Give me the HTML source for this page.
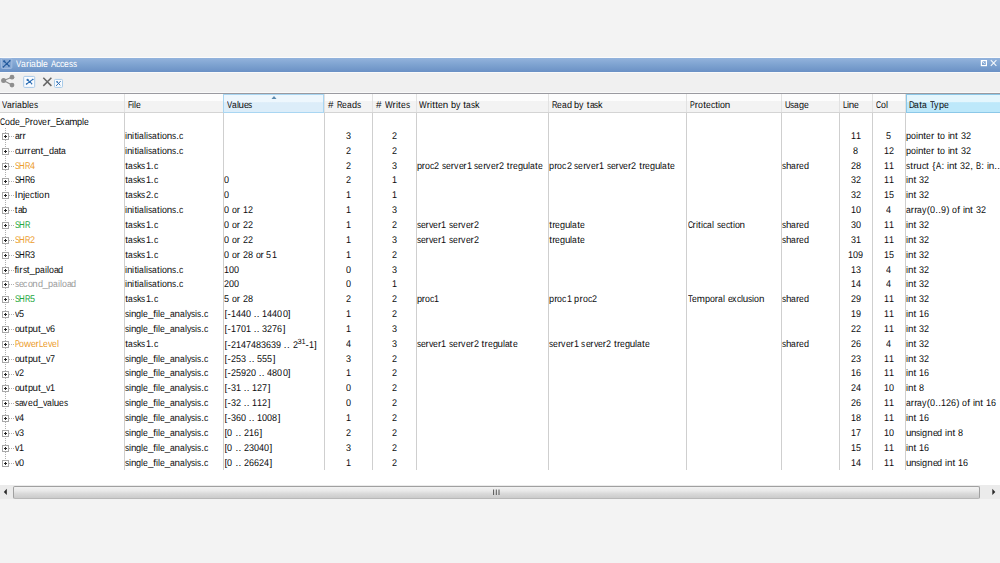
<!DOCTYPE html><html><head><meta charset="utf-8"><style>
*{margin:0;padding:0;box-sizing:border-box}
html,body{width:1000px;height:563px;overflow:hidden;background:#f3f3f3;font-family:"Liberation Sans",sans-serif;text-rendering:geometricPrecision}
.a{position:absolute}
.t{position:absolute;white-space:pre;font-size:9.8px;letter-spacing:0px;line-height:1;color:#0c0c0c}
.t b{font-weight:normal}
.k0{display:inline-block;width:5.20px;transform:scaleX(0.796);transform-origin:0 0}
.k1{display:inline-block;width:4.76px;transform:scaleX(0.873);transform-origin:0 0}
.k2{margin:0 0.03px}
.k3{display:inline-block;width:2.00px;transform:scaleX(0.916);transform-origin:0 0}
.k4{display:inline-block;width:5.06px;transform:scaleX(0.929);transform-origin:0 0}
.k5{display:inline-block;width:2.00px;transform:scaleX(0.916);transform-origin:0 0}
.k6{display:inline-block;width:4.78px;transform:scaleX(0.876);transform-origin:0 0}
.k7{display:inline-block;width:4.07px;transform:scaleX(0.831);transform-origin:0 0}
.k8{display:inline-block;width:4.46px;transform:scaleX(0.745);transform-origin:0 0}
.k9{margin:0 -0.17px}
.k10{margin:0 0.53px}
.k11{margin:0 0.01px}
.k12{display:inline-block;width:5.41px;transform:scaleX(0.764);transform-origin:0 0}
.k13{display:inline-block;width:5.06px;transform:scaleX(0.929);transform-origin:0 0}
.k14{display:inline-block;width:7.67px;transform:scaleX(0.829);transform-origin:0 0}
.k15{margin:0 0.17px}
.k16{margin:0 -0.17px}
.k17{display:inline-block;width:4.43px;transform:scaleX(0.903);transform-origin:0 0}
.k18{display:inline-block;width:4.51px;transform:scaleX(0.921);transform-origin:0 0}
.k19{display:inline-block;width:4.79px;transform:scaleX(0.733);transform-origin:0 0}
.k20{display:inline-block;width:4.91px;transform:scaleX(0.901);transform-origin:0 0}
.k21{display:inline-block;width:4.27px;transform:scaleX(0.872);transform-origin:0 0}
.k22{display:inline-block;width:5.59px;transform:scaleX(0.790);transform-origin:0 0}
.k23{display:inline-block;width:5.06px;transform:scaleX(0.929);transform-origin:0 0}
.k24{display:inline-block;width:4.27px;transform:scaleX(0.784);transform-origin:0 0}
.k25{display:inline-block;width:5.08px;transform:scaleX(0.718);transform-origin:0 0}
.k26{display:inline-block;width:5.75px;transform:scaleX(0.813);transform-origin:0 0}
.k27{display:inline-block;width:4.75px;transform:scaleX(0.793);transform-origin:0 0}
.k28{display:inline-block;width:5.06px;transform:scaleX(0.929);transform-origin:0 0}
.k29{margin:0 -0.17px}
.k30{display:inline-block;width:4.43px;transform:scaleX(0.903);transform-origin:0 0}
.k31{display:inline-block;width:4.77px;transform:scaleX(0.730);transform-origin:0 0}
.k32{display:inline-block;width:4.43px;transform:scaleX(0.903);transform-origin:0 0}
.k33{margin:0 -0.21px}
.k34{margin:0 0.19px}
.k35{display:inline-block;width:5.02px;transform:scaleX(0.920);transform-origin:0 0}
.k36{display:inline-block;width:5.02px;transform:scaleX(0.920);transform-origin:0 0}
.k37{display:inline-block;width:5.02px;transform:scaleX(0.920);transform-origin:0 0}
.k38{display:inline-block;width:5.02px;transform:scaleX(0.920);transform-origin:0 0}
.k39{display:inline-block;width:5.02px;transform:scaleX(0.920);transform-origin:0 0}
.k40{display:inline-block;width:4.82px;transform:scaleX(0.737);transform-origin:0 0}
.k41{display:inline-block;width:5.74px;transform:scaleX(0.811);transform-origin:0 0}
.k42{display:inline-block;width:5.02px;transform:scaleX(0.920);transform-origin:0 0}
.k43{margin:0 -0.17px}
.k44{margin:0 0.50px}
.k45{display:inline-block;width:5.24px;transform:scaleX(0.801);transform-origin:0 0}
.k46{margin:0 0.19px}
.k47{margin:0 0.19px}
.k48{display:inline-block;width:5.11px;transform:scaleX(0.782);transform-origin:0 0}
.k49{display:inline-block;width:5.02px;transform:scaleX(0.920);transform-origin:0 0}
.k50{display:inline-block;width:5.02px;transform:scaleX(0.920);transform-origin:0 0}
.k51{margin:0 0.30px}
.k52{margin:0 0.11px}
.k53{margin:0 0.07px}
.k54{display:inline-block;width:5.02px;transform:scaleX(0.920);transform-origin:0 0}
.k55{margin:0 0.07px}
.k56{margin:0 0.04px}
.k57{margin:0 0.34px}
.k58{margin:0 -0.04px}
.k59{margin:0 0.34px}
.k60{display:inline-block;width:5.02px;transform:scaleX(0.920);transform-origin:0 0}
.k61{margin:0 -0.24px}
.k62{display:inline-block;width:5.20px;transform:scaleX(0.813);transform-origin:0 0}
.k63{display:inline-block;width:4.76px;transform:scaleX(0.891);transform-origin:0 0}
.k64{margin:0 0.07px}
.k65{margin:0 -0.07px}
.k66{margin:0 -0.14px}
.k67{margin:0 -0.07px}
.k68{display:inline-block;width:4.78px;transform:scaleX(0.895);transform-origin:0 0}
.k69{margin:0 0.04px}
.k70{display:inline-block;width:5.24px;transform:scaleX(0.818);transform-origin:0 0}
.k71{display:inline-block;width:4.27px;transform:scaleX(0.890);transform-origin:0 0}
.k72{display:inline-block;width:4.07px;transform:scaleX(0.848);transform-origin:0 0}
</style></head><body>

<div class="a" style="left:0;top:57px;width:1000px;height:1px;background:#fbfbfb"></div>
<div class="a" style="left:0;top:58px;width:1000px;height:14px;background:linear-gradient(#93b3dc,#7da2d0 50%,#6b91c5)"></div>
<div class="a" style="left:0;top:72px;width:1000px;height:20px;background:#f0f0f0;border-top:1px solid #fafafa"></div>
<div class="a" style="left:0;top:92px;width:1000px;height:1px;background:#f9f9f9"></div>
<div class="a" style="left:0;top:93px;width:1000px;height:1px;background:#9a9aa0"></div>
<div class="a" style="left:0;top:94px;width:1000px;height:391px;background:#fff"></div>
<div class="a" style="left:0;top:94px;width:1000px;height:19px;background:linear-gradient(#fdfdfd 0,#fdfdfd 36%,#f3f3f3 41%,#f3f3f3 100%);border-bottom:1px solid #d4d4d4"></div>
<div class="a" style="left:124.0px;top:94px;width:1px;height:18px;background:#e2e2e2"></div>
<div class="a" style="left:223.0px;top:94px;width:1px;height:18px;background:#e2e2e2"></div>
<div class="a" style="left:324.0px;top:94px;width:1px;height:18px;background:#e2e2e2"></div>
<div class="a" style="left:372.0px;top:94px;width:1px;height:18px;background:#e2e2e2"></div>
<div class="a" style="left:415.5px;top:94px;width:1px;height:18px;background:#e2e2e2"></div>
<div class="a" style="left:548.0px;top:94px;width:1px;height:18px;background:#e2e2e2"></div>
<div class="a" style="left:686.4px;top:94px;width:1px;height:18px;background:#e2e2e2"></div>
<div class="a" style="left:781.0px;top:94px;width:1px;height:18px;background:#e2e2e2"></div>
<div class="a" style="left:839.0px;top:94px;width:1px;height:18px;background:#e2e2e2"></div>
<div class="a" style="left:872.0px;top:94px;width:1px;height:18px;background:#e2e2e2"></div>
<div class="a" style="left:905.0px;top:94px;width:1px;height:18px;background:#e2e2e2"></div>
<div class="a" style="left:223.4px;top:94px;width:101px;height:19px;background:linear-gradient(#eef7fd 0,#eef7fd 40%,#dcedf9 45%);border:1px solid #a9d6f2"></div>
<div class="a" style="left:905.5px;top:94px;width:95px;height:19px;background:linear-gradient(#e4f6fd 0,#e4f6fd 40%,#bde8fa 45%);border:1px solid #8cc8e8;border-right:0"></div>
<svg class="a" style="left:270px;top:95px" width="8" height="5"><path d="M1.5 4 L4 1 L6.5 4 Z" fill="#5a8ab0"/></svg>
<div class="t" style="left:1.8px;top:101.20px"><b class="k0">V</b><b class="k1">a</b><b class="k2">r</b><b class="k3">i</b><b class="k1">a</b><b class="k4">b</b><b class="k5">l</b><b class="k6">e</b><b class="k7">s</b></div>
<div class="t" style="left:127.6px;top:101.20px"><b class="k8">F</b><b class="k3">i</b><b class="k5">l</b><b class="k6">e</b></div>
<div class="t" style="left:226.6px;top:101.20px"><b class="k0">V</b><b class="k1">a</b><b class="k5">l</b><b class="k9">u</b><b class="k6">e</b><b class="k7">s</b></div>
<div class="t" style="left:327.6px;top:101.20px"><b class="k10">#</b><b class="k11">&#32;</b><b class="k12">R</b><b class="k6">e</b><b class="k1">a</b><b class="k13">d</b><b class="k7">s</b></div>
<div class="t" style="left:375.6px;top:101.20px"><b class="k10">#</b><b class="k11">&#32;</b><b class="k14">W</b><b class="k2">r</b><b class="k3">i</b><b class="k15">t</b><b class="k6">e</b><b class="k7">s</b></div>
<div class="t" style="left:419.2px;top:101.20px"><b class="k14">W</b><b class="k2">r</b><b class="k3">i</b><b class="k15">t</b><b class="k15">t</b><b class="k6">e</b><b class="k16">n</b><b class="k11">&#32;</b><b class="k4">b</b><b class="k17">y</b><b class="k11">&#32;</b><b class="k15">t</b><b class="k1">a</b><b class="k7">s</b><b class="k18">k</b></div>
<div class="t" style="left:551.6px;top:101.20px"><b class="k12">R</b><b class="k6">e</b><b class="k1">a</b><b class="k13">d</b><b class="k11">&#32;</b><b class="k4">b</b><b class="k17">y</b><b class="k11">&#32;</b><b class="k15">t</b><b class="k1">a</b><b class="k7">s</b><b class="k18">k</b></div>
<div class="t" style="left:690.0px;top:101.20px"><b class="k19">P</b><b class="k2">r</b><b class="k20">o</b><b class="k15">t</b><b class="k6">e</b><b class="k21">c</b><b class="k15">t</b><b class="k3">i</b><b class="k20">o</b><b class="k16">n</b></div>
<div class="t" style="left:784.6px;top:101.20px"><b class="k22">U</b><b class="k7">s</b><b class="k1">a</b><b class="k23">g</b><b class="k6">e</b></div>
<div class="t" style="left:842.6px;top:101.20px"><b class="k24">L</b><b class="k3">i</b><b class="k16">n</b><b class="k6">e</b></div>
<div class="t" style="left:875.6px;top:101.20px"><b class="k25">C</b><b class="k20">o</b><b class="k5">l</b></div>
<div class="t" style="left:908.6px;top:101.20px"><b class="k26">D</b><b class="k1">a</b><b class="k15">t</b><b class="k1">a</b><b class="k11">&#32;</b><b class="k27">T</b><b class="k17">y</b><b class="k28">p</b><b class="k6">e</b></div>
<div class="a" style="left:124.0px;top:113px;width:1px;height:357px;background:#cfcfcf"></div>
<div class="a" style="left:223.0px;top:113px;width:1px;height:357px;background:#cfcfcf"></div>
<div class="a" style="left:324.0px;top:113px;width:1px;height:357px;background:#cfcfcf"></div>
<div class="a" style="left:372.0px;top:113px;width:1px;height:357px;background:#cfcfcf"></div>
<div class="a" style="left:415.5px;top:113px;width:1px;height:357px;background:#cfcfcf"></div>
<div class="a" style="left:548.0px;top:113px;width:1px;height:357px;background:#cfcfcf"></div>
<div class="a" style="left:686.4px;top:113px;width:1px;height:357px;background:#cfcfcf"></div>
<div class="a" style="left:781.0px;top:113px;width:1px;height:357px;background:#cfcfcf"></div>
<div class="a" style="left:839.0px;top:113px;width:1px;height:357px;background:#cfcfcf"></div>
<div class="a" style="left:872.0px;top:113px;width:1px;height:357px;background:#cfcfcf"></div>
<div class="a" style="left:905.0px;top:113px;width:1px;height:357px;background:#cfcfcf"></div>
<div class="t" style="left:0px;top:117.90px"><b class="k25">C</b><b class="k20">o</b><b class="k13">d</b><b class="k6">e</b><b class="k29">_</b><b class="k19">P</b><b class="k2">r</b><b class="k20">o</b><b class="k30">v</b><b class="k6">e</b><b class="k2">r</b><b class="k29">_</b><b class="k31">E</b><b class="k32">x</b><b class="k1">a</b><b class="k33">m</b><b class="k28">p</b><b class="k5">l</b><b class="k6">e</b></div>
<div class="a" style="left:5px;top:128px;width:1px;height:335px;border-left:1px dotted #b0b0b0"></div>
<div class="a" style="left:2px;top:133px;width:7px;height:7px;border:1px solid #a8a8a8;background:#fff"></div>
<div class="a" style="left:4px;top:136px;width:3px;height:1px;background:#262626"></div>
<div class="a" style="left:5px;top:135px;width:1px;height:3px;background:#262626"></div>
<div class="a" style="left:9px;top:136px;width:5px;height:0;border-top:1px dotted #b0b0b0"></div>
<div class="t" style="left:14.5px;top:131.85px;color:#0c0c0c"><b class="k1">a</b><b class="k2">r</b><b class="k2">r</b></div>
<div class="t" style="left:125.1px;top:131.85px"><b class="k3">i</b><b class="k16">n</b><b class="k3">i</b><b class="k15">t</b><b class="k3">i</b><b class="k1">a</b><b class="k5">l</b><b class="k3">i</b><b class="k7">s</b><b class="k1">a</b><b class="k15">t</b><b class="k3">i</b><b class="k20">o</b><b class="k16">n</b><b class="k7">s</b><b class="k34">.</b><b class="k21">c</b></div>
<div class="t" style="left:324.6px;width:47.4px;text-align:center;top:131.85px"><b class="k35">3</b></div>
<div class="t" style="left:372.6px;width:42.9px;text-align:center;top:131.85px"><b class="k36">2</b></div>
<div class="t" style="left:839.6px;width:32.4px;text-align:center;top:131.85px"><b class="k37">1</b><b class="k37">1</b></div>
<div class="t" style="left:872.6px;width:32.4px;text-align:center;top:131.85px"><b class="k38">5</b></div>
<div class="t" style="left:906.1px;top:131.85px"><b class="k28">p</b><b class="k20">o</b><b class="k3">i</b><b class="k16">n</b><b class="k15">t</b><b class="k6">e</b><b class="k2">r</b><b class="k11">&#32;</b><b class="k15">t</b><b class="k20">o</b><b class="k11">&#32;</b><b class="k3">i</b><b class="k16">n</b><b class="k15">t</b><b class="k11">&#32;</b><b class="k35">3</b><b class="k36">2</b></div>
<div class="a" style="left:2px;top:148px;width:7px;height:7px;border:1px solid #a8a8a8;background:#fff"></div>
<div class="a" style="left:4px;top:151px;width:3px;height:1px;background:#262626"></div>
<div class="a" style="left:5px;top:150px;width:1px;height:3px;background:#262626"></div>
<div class="a" style="left:9px;top:151px;width:5px;height:0;border-top:1px dotted #b0b0b0"></div>
<div class="t" style="left:14.5px;top:146.70px;color:#0c0c0c"><b class="k21">c</b><b class="k9">u</b><b class="k2">r</b><b class="k2">r</b><b class="k6">e</b><b class="k16">n</b><b class="k15">t</b><b class="k29">_</b><b class="k13">d</b><b class="k1">a</b><b class="k15">t</b><b class="k1">a</b></div>
<div class="t" style="left:125.1px;top:146.70px"><b class="k3">i</b><b class="k16">n</b><b class="k3">i</b><b class="k15">t</b><b class="k3">i</b><b class="k1">a</b><b class="k5">l</b><b class="k3">i</b><b class="k7">s</b><b class="k1">a</b><b class="k15">t</b><b class="k3">i</b><b class="k20">o</b><b class="k16">n</b><b class="k7">s</b><b class="k34">.</b><b class="k21">c</b></div>
<div class="t" style="left:324.6px;width:47.4px;text-align:center;top:146.70px"><b class="k36">2</b></div>
<div class="t" style="left:372.6px;width:42.9px;text-align:center;top:146.70px"><b class="k36">2</b></div>
<div class="t" style="left:839.6px;width:32.4px;text-align:center;top:146.70px"><b class="k39">8</b></div>
<div class="t" style="left:872.6px;width:32.4px;text-align:center;top:146.70px"><b class="k37">1</b><b class="k36">2</b></div>
<div class="t" style="left:906.1px;top:146.70px"><b class="k28">p</b><b class="k20">o</b><b class="k3">i</b><b class="k16">n</b><b class="k15">t</b><b class="k6">e</b><b class="k2">r</b><b class="k11">&#32;</b><b class="k15">t</b><b class="k20">o</b><b class="k11">&#32;</b><b class="k3">i</b><b class="k16">n</b><b class="k15">t</b><b class="k11">&#32;</b><b class="k35">3</b><b class="k36">2</b></div>
<div class="a" style="left:2px;top:163px;width:7px;height:7px;border:1px solid #a8a8a8;background:#fff"></div>
<div class="a" style="left:4px;top:166px;width:3px;height:1px;background:#262626"></div>
<div class="a" style="left:5px;top:165px;width:1px;height:3px;background:#262626"></div>
<div class="a" style="left:9px;top:166px;width:5px;height:0;border-top:1px dotted #b0b0b0"></div>
<div class="t" style="left:14.5px;top:161.55px;color:#ec9c2c"><b class="k40">S</b><b class="k41">H</b><b class="k12">R</b><b class="k42">4</b></div>
<div class="t" style="left:125.1px;top:161.55px"><b class="k15">t</b><b class="k1">a</b><b class="k7">s</b><b class="k18">k</b><b class="k7">s</b><b class="k37">1</b><b class="k34">.</b><b class="k21">c</b></div>
<div class="t" style="left:324.6px;width:47.4px;text-align:center;top:161.55px"><b class="k36">2</b></div>
<div class="t" style="left:372.6px;width:42.9px;text-align:center;top:161.55px"><b class="k35">3</b></div>
<div class="t" style="left:416.7px;top:161.55px"><b class="k28">p</b><b class="k2">r</b><b class="k20">o</b><b class="k21">c</b><b class="k36">2</b><b class="k11">&#32;</b><b class="k7">s</b><b class="k6">e</b><b class="k2">r</b><b class="k30">v</b><b class="k6">e</b><b class="k2">r</b><b class="k37">1</b><b class="k11">&#32;</b><b class="k7">s</b><b class="k6">e</b><b class="k2">r</b><b class="k30">v</b><b class="k6">e</b><b class="k2">r</b><b class="k36">2</b><b class="k11">&#32;</b><b class="k15">t</b><b class="k2">r</b><b class="k6">e</b><b class="k23">g</b><b class="k9">u</b><b class="k5">l</b><b class="k1">a</b><b class="k15">t</b><b class="k6">e</b></div>
<div class="t" style="left:549.1px;top:161.55px"><b class="k28">p</b><b class="k2">r</b><b class="k20">o</b><b class="k21">c</b><b class="k36">2</b><b class="k11">&#32;</b><b class="k7">s</b><b class="k6">e</b><b class="k2">r</b><b class="k30">v</b><b class="k6">e</b><b class="k2">r</b><b class="k37">1</b><b class="k11">&#32;</b><b class="k7">s</b><b class="k6">e</b><b class="k2">r</b><b class="k30">v</b><b class="k6">e</b><b class="k2">r</b><b class="k36">2</b><b class="k11">&#32;</b><b class="k15">t</b><b class="k2">r</b><b class="k6">e</b><b class="k23">g</b><b class="k9">u</b><b class="k5">l</b><b class="k1">a</b><b class="k15">t</b><b class="k6">e</b></div>
<div class="t" style="left:782.1px;top:161.55px"><b class="k7">s</b><b class="k43">h</b><b class="k1">a</b><b class="k2">r</b><b class="k6">e</b><b class="k13">d</b></div>
<div class="t" style="left:839.6px;width:32.4px;text-align:center;top:161.55px"><b class="k36">2</b><b class="k39">8</b></div>
<div class="t" style="left:872.6px;width:32.4px;text-align:center;top:161.55px"><b class="k37">1</b><b class="k37">1</b></div>
<div class="t" style="left:906.1px;top:161.55px"><b class="k7">s</b><b class="k15">t</b><b class="k2">r</b><b class="k9">u</b><b class="k21">c</b><b class="k15">t</b><b class="k11">&#32;</b><b class="k44">{</b><b class="k45">A</b><b class="k46">:</b><b class="k11">&#32;</b><b class="k3">i</b><b class="k16">n</b><b class="k15">t</b><b class="k11">&#32;</b><b class="k35">3</b><b class="k36">2</b><b class="k47">,</b><b class="k11">&#32;</b><b class="k48">B</b><b class="k46">:</b><b class="k11">&#32;</b><b class="k3">i</b><b class="k16">n</b><b class="k34">.</b><b class="k34">.</b></div>
<div class="a" style="left:2px;top:178px;width:7px;height:7px;border:1px solid #a8a8a8;background:#fff"></div>
<div class="a" style="left:4px;top:181px;width:3px;height:1px;background:#262626"></div>
<div class="a" style="left:5px;top:180px;width:1px;height:3px;background:#262626"></div>
<div class="a" style="left:9px;top:181px;width:5px;height:0;border-top:1px dotted #b0b0b0"></div>
<div class="t" style="left:14.5px;top:176.40px;color:#0c0c0c"><b class="k40">S</b><b class="k41">H</b><b class="k12">R</b><b class="k49">6</b></div>
<div class="t" style="left:125.1px;top:176.40px"><b class="k15">t</b><b class="k1">a</b><b class="k7">s</b><b class="k18">k</b><b class="k7">s</b><b class="k37">1</b><b class="k34">.</b><b class="k21">c</b></div>
<div class="t" style="left:224.1px;top:176.40px"><b class="k50">0</b></div>
<div class="t" style="left:324.6px;width:47.4px;text-align:center;top:176.40px"><b class="k36">2</b></div>
<div class="t" style="left:372.6px;width:42.9px;text-align:center;top:176.40px"><b class="k37">1</b></div>
<div class="t" style="left:839.6px;width:32.4px;text-align:center;top:176.40px"><b class="k35">3</b><b class="k36">2</b></div>
<div class="t" style="left:872.6px;width:32.4px;text-align:center;top:176.40px"><b class="k37">1</b><b class="k37">1</b></div>
<div class="t" style="left:906.1px;top:176.40px"><b class="k3">i</b><b class="k16">n</b><b class="k15">t</b><b class="k11">&#32;</b><b class="k35">3</b><b class="k36">2</b></div>
<div class="a" style="left:2px;top:192px;width:7px;height:7px;border:1px solid #a8a8a8;background:#fff"></div>
<div class="a" style="left:4px;top:195px;width:3px;height:1px;background:#262626"></div>
<div class="a" style="left:5px;top:194px;width:1px;height:3px;background:#262626"></div>
<div class="a" style="left:9px;top:195px;width:5px;height:0;border-top:1px dotted #b0b0b0"></div>
<div class="t" style="left:14.5px;top:191.25px;color:#0c0c0c"><b class="k51">I</b><b class="k16">n</b><b class="k52">j</b><b class="k6">e</b><b class="k21">c</b><b class="k15">t</b><b class="k3">i</b><b class="k20">o</b><b class="k16">n</b></div>
<div class="t" style="left:125.1px;top:191.25px"><b class="k15">t</b><b class="k1">a</b><b class="k7">s</b><b class="k18">k</b><b class="k7">s</b><b class="k36">2</b><b class="k34">.</b><b class="k21">c</b></div>
<div class="t" style="left:224.1px;top:191.25px"><b class="k50">0</b></div>
<div class="t" style="left:324.6px;width:47.4px;text-align:center;top:191.25px"><b class="k37">1</b></div>
<div class="t" style="left:372.6px;width:42.9px;text-align:center;top:191.25px"><b class="k37">1</b></div>
<div class="t" style="left:839.6px;width:32.4px;text-align:center;top:191.25px"><b class="k35">3</b><b class="k36">2</b></div>
<div class="t" style="left:872.6px;width:32.4px;text-align:center;top:191.25px"><b class="k37">1</b><b class="k38">5</b></div>
<div class="t" style="left:906.1px;top:191.25px"><b class="k3">i</b><b class="k16">n</b><b class="k15">t</b><b class="k11">&#32;</b><b class="k35">3</b><b class="k36">2</b></div>
<div class="a" style="left:2px;top:207px;width:7px;height:7px;border:1px solid #a8a8a8;background:#fff"></div>
<div class="a" style="left:4px;top:210px;width:3px;height:1px;background:#262626"></div>
<div class="a" style="left:5px;top:209px;width:1px;height:3px;background:#262626"></div>
<div class="a" style="left:9px;top:210px;width:5px;height:0;border-top:1px dotted #b0b0b0"></div>
<div class="t" style="left:14.5px;top:206.10px;color:#0c0c0c"><b class="k15">t</b><b class="k1">a</b><b class="k4">b</b></div>
<div class="t" style="left:125.1px;top:206.10px"><b class="k3">i</b><b class="k16">n</b><b class="k3">i</b><b class="k15">t</b><b class="k3">i</b><b class="k1">a</b><b class="k5">l</b><b class="k3">i</b><b class="k7">s</b><b class="k1">a</b><b class="k15">t</b><b class="k3">i</b><b class="k20">o</b><b class="k16">n</b><b class="k7">s</b><b class="k34">.</b><b class="k21">c</b></div>
<div class="t" style="left:224.1px;top:206.10px"><b class="k50">0</b><b class="k11">&#32;</b><b class="k20">o</b><b class="k2">r</b><b class="k11">&#32;</b><b class="k37">1</b><b class="k36">2</b></div>
<div class="t" style="left:324.6px;width:47.4px;text-align:center;top:206.10px"><b class="k37">1</b></div>
<div class="t" style="left:372.6px;width:42.9px;text-align:center;top:206.10px"><b class="k35">3</b></div>
<div class="t" style="left:839.6px;width:32.4px;text-align:center;top:206.10px"><b class="k37">1</b><b class="k50">0</b></div>
<div class="t" style="left:872.6px;width:32.4px;text-align:center;top:206.10px"><b class="k42">4</b></div>
<div class="t" style="left:906.1px;top:206.10px"><b class="k1">a</b><b class="k2">r</b><b class="k2">r</b><b class="k1">a</b><b class="k17">y</b><b class="k53">(</b><b class="k50">0</b><b class="k34">.</b><b class="k34">.</b><b class="k54">9</b><b class="k55">)</b><b class="k11">&#32;</b><b class="k20">o</b><b class="k56">f</b><b class="k11">&#32;</b><b class="k3">i</b><b class="k16">n</b><b class="k15">t</b><b class="k11">&#32;</b><b class="k35">3</b><b class="k36">2</b></div>
<div class="a" style="left:2px;top:222px;width:7px;height:7px;border:1px solid #a8a8a8;background:#fff"></div>
<div class="a" style="left:4px;top:225px;width:3px;height:1px;background:#262626"></div>
<div class="a" style="left:5px;top:224px;width:1px;height:3px;background:#262626"></div>
<div class="a" style="left:9px;top:225px;width:5px;height:0;border-top:1px dotted #b0b0b0"></div>
<div class="t" style="left:14.5px;top:220.95px;color:#22a63c"><b class="k40">S</b><b class="k41">H</b><b class="k12">R</b></div>
<div class="t" style="left:125.1px;top:220.95px"><b class="k15">t</b><b class="k1">a</b><b class="k7">s</b><b class="k18">k</b><b class="k7">s</b><b class="k37">1</b><b class="k34">.</b><b class="k21">c</b></div>
<div class="t" style="left:224.1px;top:220.95px"><b class="k50">0</b><b class="k11">&#32;</b><b class="k20">o</b><b class="k2">r</b><b class="k11">&#32;</b><b class="k36">2</b><b class="k36">2</b></div>
<div class="t" style="left:324.6px;width:47.4px;text-align:center;top:220.95px"><b class="k37">1</b></div>
<div class="t" style="left:372.6px;width:42.9px;text-align:center;top:220.95px"><b class="k36">2</b></div>
<div class="t" style="left:416.7px;top:220.95px"><b class="k7">s</b><b class="k6">e</b><b class="k2">r</b><b class="k30">v</b><b class="k6">e</b><b class="k2">r</b><b class="k37">1</b><b class="k11">&#32;</b><b class="k7">s</b><b class="k6">e</b><b class="k2">r</b><b class="k30">v</b><b class="k6">e</b><b class="k2">r</b><b class="k36">2</b></div>
<div class="t" style="left:549.1px;top:220.95px"><b class="k15">t</b><b class="k2">r</b><b class="k6">e</b><b class="k23">g</b><b class="k9">u</b><b class="k5">l</b><b class="k1">a</b><b class="k15">t</b><b class="k6">e</b></div>
<div class="t" style="left:687.5px;top:220.95px"><b class="k25">C</b><b class="k2">r</b><b class="k3">i</b><b class="k15">t</b><b class="k3">i</b><b class="k21">c</b><b class="k1">a</b><b class="k5">l</b><b class="k11">&#32;</b><b class="k7">s</b><b class="k6">e</b><b class="k21">c</b><b class="k15">t</b><b class="k3">i</b><b class="k20">o</b><b class="k16">n</b></div>
<div class="t" style="left:782.1px;top:220.95px"><b class="k7">s</b><b class="k43">h</b><b class="k1">a</b><b class="k2">r</b><b class="k6">e</b><b class="k13">d</b></div>
<div class="t" style="left:839.6px;width:32.4px;text-align:center;top:220.95px"><b class="k35">3</b><b class="k50">0</b></div>
<div class="t" style="left:872.6px;width:32.4px;text-align:center;top:220.95px"><b class="k37">1</b><b class="k37">1</b></div>
<div class="t" style="left:906.1px;top:220.95px"><b class="k3">i</b><b class="k16">n</b><b class="k15">t</b><b class="k11">&#32;</b><b class="k35">3</b><b class="k36">2</b></div>
<div class="a" style="left:2px;top:237px;width:7px;height:7px;border:1px solid #a8a8a8;background:#fff"></div>
<div class="a" style="left:4px;top:240px;width:3px;height:1px;background:#262626"></div>
<div class="a" style="left:5px;top:239px;width:1px;height:3px;background:#262626"></div>
<div class="a" style="left:9px;top:240px;width:5px;height:0;border-top:1px dotted #b0b0b0"></div>
<div class="t" style="left:14.5px;top:235.80px;color:#ec9c2c"><b class="k40">S</b><b class="k41">H</b><b class="k12">R</b><b class="k36">2</b></div>
<div class="t" style="left:125.1px;top:235.80px"><b class="k15">t</b><b class="k1">a</b><b class="k7">s</b><b class="k18">k</b><b class="k7">s</b><b class="k37">1</b><b class="k34">.</b><b class="k21">c</b></div>
<div class="t" style="left:224.1px;top:235.80px"><b class="k50">0</b><b class="k11">&#32;</b><b class="k20">o</b><b class="k2">r</b><b class="k11">&#32;</b><b class="k36">2</b><b class="k36">2</b></div>
<div class="t" style="left:324.6px;width:47.4px;text-align:center;top:235.80px"><b class="k37">1</b></div>
<div class="t" style="left:372.6px;width:42.9px;text-align:center;top:235.80px"><b class="k35">3</b></div>
<div class="t" style="left:416.7px;top:235.80px"><b class="k7">s</b><b class="k6">e</b><b class="k2">r</b><b class="k30">v</b><b class="k6">e</b><b class="k2">r</b><b class="k37">1</b><b class="k11">&#32;</b><b class="k7">s</b><b class="k6">e</b><b class="k2">r</b><b class="k30">v</b><b class="k6">e</b><b class="k2">r</b><b class="k36">2</b></div>
<div class="t" style="left:549.1px;top:235.80px"><b class="k15">t</b><b class="k2">r</b><b class="k6">e</b><b class="k23">g</b><b class="k9">u</b><b class="k5">l</b><b class="k1">a</b><b class="k15">t</b><b class="k6">e</b></div>
<div class="t" style="left:782.1px;top:235.80px"><b class="k7">s</b><b class="k43">h</b><b class="k1">a</b><b class="k2">r</b><b class="k6">e</b><b class="k13">d</b></div>
<div class="t" style="left:839.6px;width:32.4px;text-align:center;top:235.80px"><b class="k35">3</b><b class="k37">1</b></div>
<div class="t" style="left:872.6px;width:32.4px;text-align:center;top:235.80px"><b class="k37">1</b><b class="k37">1</b></div>
<div class="t" style="left:906.1px;top:235.80px"><b class="k3">i</b><b class="k16">n</b><b class="k15">t</b><b class="k11">&#32;</b><b class="k35">3</b><b class="k36">2</b></div>
<div class="a" style="left:2px;top:252px;width:7px;height:7px;border:1px solid #a8a8a8;background:#fff"></div>
<div class="a" style="left:4px;top:255px;width:3px;height:1px;background:#262626"></div>
<div class="a" style="left:5px;top:254px;width:1px;height:3px;background:#262626"></div>
<div class="a" style="left:9px;top:255px;width:5px;height:0;border-top:1px dotted #b0b0b0"></div>
<div class="t" style="left:14.5px;top:250.65px;color:#0c0c0c"><b class="k40">S</b><b class="k41">H</b><b class="k12">R</b><b class="k35">3</b></div>
<div class="t" style="left:125.1px;top:250.65px"><b class="k15">t</b><b class="k1">a</b><b class="k7">s</b><b class="k18">k</b><b class="k7">s</b><b class="k37">1</b><b class="k34">.</b><b class="k21">c</b></div>
<div class="t" style="left:224.1px;top:250.65px"><b class="k50">0</b><b class="k11">&#32;</b><b class="k20">o</b><b class="k2">r</b><b class="k11">&#32;</b><b class="k36">2</b><b class="k39">8</b><b class="k11">&#32;</b><b class="k20">o</b><b class="k2">r</b><b class="k11">&#32;</b><b class="k38">5</b><b class="k37">1</b></div>
<div class="t" style="left:324.6px;width:47.4px;text-align:center;top:250.65px"><b class="k37">1</b></div>
<div class="t" style="left:372.6px;width:42.9px;text-align:center;top:250.65px"><b class="k36">2</b></div>
<div class="t" style="left:839.6px;width:32.4px;text-align:center;top:250.65px"><b class="k37">1</b><b class="k50">0</b><b class="k54">9</b></div>
<div class="t" style="left:872.6px;width:32.4px;text-align:center;top:250.65px"><b class="k37">1</b><b class="k38">5</b></div>
<div class="t" style="left:906.1px;top:250.65px"><b class="k3">i</b><b class="k16">n</b><b class="k15">t</b><b class="k11">&#32;</b><b class="k35">3</b><b class="k36">2</b></div>
<div class="a" style="left:2px;top:267px;width:7px;height:7px;border:1px solid #a8a8a8;background:#fff"></div>
<div class="a" style="left:4px;top:270px;width:3px;height:1px;background:#262626"></div>
<div class="a" style="left:5px;top:269px;width:1px;height:3px;background:#262626"></div>
<div class="a" style="left:9px;top:270px;width:5px;height:0;border-top:1px dotted #b0b0b0"></div>
<div class="t" style="left:14.5px;top:265.50px;color:#0c0c0c"><b class="k56">f</b><b class="k3">i</b><b class="k2">r</b><b class="k7">s</b><b class="k15">t</b><b class="k29">_</b><b class="k28">p</b><b class="k1">a</b><b class="k3">i</b><b class="k5">l</b><b class="k20">o</b><b class="k1">a</b><b class="k13">d</b></div>
<div class="t" style="left:125.1px;top:265.50px"><b class="k3">i</b><b class="k16">n</b><b class="k3">i</b><b class="k15">t</b><b class="k3">i</b><b class="k1">a</b><b class="k5">l</b><b class="k3">i</b><b class="k7">s</b><b class="k1">a</b><b class="k15">t</b><b class="k3">i</b><b class="k20">o</b><b class="k16">n</b><b class="k7">s</b><b class="k34">.</b><b class="k21">c</b></div>
<div class="t" style="left:224.1px;top:265.50px"><b class="k37">1</b><b class="k50">0</b><b class="k50">0</b></div>
<div class="t" style="left:324.6px;width:47.4px;text-align:center;top:265.50px"><b class="k50">0</b></div>
<div class="t" style="left:372.6px;width:42.9px;text-align:center;top:265.50px"><b class="k35">3</b></div>
<div class="t" style="left:839.6px;width:32.4px;text-align:center;top:265.50px"><b class="k37">1</b><b class="k35">3</b></div>
<div class="t" style="left:872.6px;width:32.4px;text-align:center;top:265.50px"><b class="k42">4</b></div>
<div class="t" style="left:906.1px;top:265.50px"><b class="k3">i</b><b class="k16">n</b><b class="k15">t</b><b class="k11">&#32;</b><b class="k35">3</b><b class="k36">2</b></div>
<div class="a" style="left:2px;top:281px;width:7px;height:7px;border:1px solid #a8a8a8;background:#fff"></div>
<div class="a" style="left:4px;top:284px;width:3px;height:1px;background:#262626"></div>
<div class="a" style="left:5px;top:283px;width:1px;height:3px;background:#262626"></div>
<div class="a" style="left:9px;top:284px;width:5px;height:0;border-top:1px dotted #b0b0b0"></div>
<div class="t" style="left:14.5px;top:280.35px;color:#9a9a9a"><b class="k7">s</b><b class="k6">e</b><b class="k21">c</b><b class="k20">o</b><b class="k16">n</b><b class="k13">d</b><b class="k29">_</b><b class="k28">p</b><b class="k1">a</b><b class="k3">i</b><b class="k5">l</b><b class="k20">o</b><b class="k1">a</b><b class="k13">d</b></div>
<div class="t" style="left:125.1px;top:280.35px"><b class="k3">i</b><b class="k16">n</b><b class="k3">i</b><b class="k15">t</b><b class="k3">i</b><b class="k1">a</b><b class="k5">l</b><b class="k3">i</b><b class="k7">s</b><b class="k1">a</b><b class="k15">t</b><b class="k3">i</b><b class="k20">o</b><b class="k16">n</b><b class="k7">s</b><b class="k34">.</b><b class="k21">c</b></div>
<div class="t" style="left:224.1px;top:280.35px"><b class="k36">2</b><b class="k50">0</b><b class="k50">0</b></div>
<div class="t" style="left:324.6px;width:47.4px;text-align:center;top:280.35px"><b class="k50">0</b></div>
<div class="t" style="left:372.6px;width:42.9px;text-align:center;top:280.35px"><b class="k37">1</b></div>
<div class="t" style="left:839.6px;width:32.4px;text-align:center;top:280.35px"><b class="k37">1</b><b class="k42">4</b></div>
<div class="t" style="left:872.6px;width:32.4px;text-align:center;top:280.35px"><b class="k42">4</b></div>
<div class="t" style="left:906.1px;top:280.35px"><b class="k3">i</b><b class="k16">n</b><b class="k15">t</b><b class="k11">&#32;</b><b class="k35">3</b><b class="k36">2</b></div>
<div class="a" style="left:2px;top:296px;width:7px;height:7px;border:1px solid #a8a8a8;background:#fff"></div>
<div class="a" style="left:4px;top:299px;width:3px;height:1px;background:#262626"></div>
<div class="a" style="left:5px;top:298px;width:1px;height:3px;background:#262626"></div>
<div class="a" style="left:9px;top:299px;width:5px;height:0;border-top:1px dotted #b0b0b0"></div>
<div class="t" style="left:14.5px;top:295.20px;color:#22a63c"><b class="k40">S</b><b class="k41">H</b><b class="k12">R</b><b class="k38">5</b></div>
<div class="t" style="left:125.1px;top:295.20px"><b class="k15">t</b><b class="k1">a</b><b class="k7">s</b><b class="k18">k</b><b class="k7">s</b><b class="k37">1</b><b class="k34">.</b><b class="k21">c</b></div>
<div class="t" style="left:224.1px;top:295.20px"><b class="k38">5</b><b class="k11">&#32;</b><b class="k20">o</b><b class="k2">r</b><b class="k11">&#32;</b><b class="k36">2</b><b class="k39">8</b></div>
<div class="t" style="left:324.6px;width:47.4px;text-align:center;top:295.20px"><b class="k36">2</b></div>
<div class="t" style="left:372.6px;width:42.9px;text-align:center;top:295.20px"><b class="k36">2</b></div>
<div class="t" style="left:416.7px;top:295.20px"><b class="k28">p</b><b class="k2">r</b><b class="k20">o</b><b class="k21">c</b><b class="k37">1</b></div>
<div class="t" style="left:549.1px;top:295.20px"><b class="k28">p</b><b class="k2">r</b><b class="k20">o</b><b class="k21">c</b><b class="k37">1</b><b class="k11">&#32;</b><b class="k28">p</b><b class="k2">r</b><b class="k20">o</b><b class="k21">c</b><b class="k36">2</b></div>
<div class="t" style="left:687.5px;top:295.20px"><b class="k27">T</b><b class="k6">e</b><b class="k33">m</b><b class="k28">p</b><b class="k20">o</b><b class="k2">r</b><b class="k1">a</b><b class="k5">l</b><b class="k11">&#32;</b><b class="k6">e</b><b class="k32">x</b><b class="k21">c</b><b class="k5">l</b><b class="k9">u</b><b class="k7">s</b><b class="k3">i</b><b class="k20">o</b><b class="k16">n</b></div>
<div class="t" style="left:782.1px;top:295.20px"><b class="k7">s</b><b class="k43">h</b><b class="k1">a</b><b class="k2">r</b><b class="k6">e</b><b class="k13">d</b></div>
<div class="t" style="left:839.6px;width:32.4px;text-align:center;top:295.20px"><b class="k36">2</b><b class="k54">9</b></div>
<div class="t" style="left:872.6px;width:32.4px;text-align:center;top:295.20px"><b class="k37">1</b><b class="k37">1</b></div>
<div class="t" style="left:906.1px;top:295.20px"><b class="k3">i</b><b class="k16">n</b><b class="k15">t</b><b class="k11">&#32;</b><b class="k35">3</b><b class="k36">2</b></div>
<div class="a" style="left:2px;top:311px;width:7px;height:7px;border:1px solid #a8a8a8;background:#fff"></div>
<div class="a" style="left:4px;top:314px;width:3px;height:1px;background:#262626"></div>
<div class="a" style="left:5px;top:313px;width:1px;height:3px;background:#262626"></div>
<div class="a" style="left:9px;top:314px;width:5px;height:0;border-top:1px dotted #b0b0b0"></div>
<div class="t" style="left:14.5px;top:310.05px;color:#0c0c0c"><b class="k30">v</b><b class="k38">5</b></div>
<div class="t" style="left:125.1px;top:310.05px"><b class="k7">s</b><b class="k3">i</b><b class="k16">n</b><b class="k23">g</b><b class="k5">l</b><b class="k6">e</b><b class="k29">_</b><b class="k56">f</b><b class="k3">i</b><b class="k5">l</b><b class="k6">e</b><b class="k29">_</b><b class="k1">a</b><b class="k16">n</b><b class="k1">a</b><b class="k5">l</b><b class="k17">y</b><b class="k7">s</b><b class="k3">i</b><b class="k7">s</b><b class="k34">.</b><b class="k21">c</b></div>
<div class="t" style="left:224.1px;top:310.05px"><b class="k57">[</b><b class="k58">-</b><b class="k37">1</b><b class="k42">4</b><b class="k42">4</b><b class="k50">0</b><b class="k11">&#32;</b><b class="k34">.</b><b class="k34">.</b><b class="k11">&#32;</b><b class="k37">1</b><b class="k42">4</b><b class="k42">4</b><b class="k50">0</b><b class="k50">0</b><b class="k59">]</b></div>
<div class="t" style="left:324.6px;width:47.4px;text-align:center;top:310.05px"><b class="k37">1</b></div>
<div class="t" style="left:372.6px;width:42.9px;text-align:center;top:310.05px"><b class="k36">2</b></div>
<div class="t" style="left:839.6px;width:32.4px;text-align:center;top:310.05px"><b class="k37">1</b><b class="k54">9</b></div>
<div class="t" style="left:872.6px;width:32.4px;text-align:center;top:310.05px"><b class="k37">1</b><b class="k37">1</b></div>
<div class="t" style="left:906.1px;top:310.05px"><b class="k3">i</b><b class="k16">n</b><b class="k15">t</b><b class="k11">&#32;</b><b class="k37">1</b><b class="k49">6</b></div>
<div class="a" style="left:2px;top:326px;width:7px;height:7px;border:1px solid #a8a8a8;background:#fff"></div>
<div class="a" style="left:4px;top:329px;width:3px;height:1px;background:#262626"></div>
<div class="a" style="left:5px;top:328px;width:1px;height:3px;background:#262626"></div>
<div class="a" style="left:9px;top:329px;width:5px;height:0;border-top:1px dotted #b0b0b0"></div>
<div class="t" style="left:14.5px;top:324.90px;color:#0c0c0c"><b class="k20">o</b><b class="k9">u</b><b class="k15">t</b><b class="k28">p</b><b class="k9">u</b><b class="k15">t</b><b class="k29">_</b><b class="k30">v</b><b class="k49">6</b></div>
<div class="t" style="left:125.1px;top:324.90px"><b class="k7">s</b><b class="k3">i</b><b class="k16">n</b><b class="k23">g</b><b class="k5">l</b><b class="k6">e</b><b class="k29">_</b><b class="k56">f</b><b class="k3">i</b><b class="k5">l</b><b class="k6">e</b><b class="k29">_</b><b class="k1">a</b><b class="k16">n</b><b class="k1">a</b><b class="k5">l</b><b class="k17">y</b><b class="k7">s</b><b class="k3">i</b><b class="k7">s</b><b class="k34">.</b><b class="k21">c</b></div>
<div class="t" style="left:224.1px;top:324.90px"><b class="k57">[</b><b class="k58">-</b><b class="k37">1</b><b class="k60">7</b><b class="k50">0</b><b class="k37">1</b><b class="k11">&#32;</b><b class="k34">.</b><b class="k34">.</b><b class="k11">&#32;</b><b class="k35">3</b><b class="k36">2</b><b class="k60">7</b><b class="k49">6</b><b class="k59">]</b></div>
<div class="t" style="left:324.6px;width:47.4px;text-align:center;top:324.90px"><b class="k37">1</b></div>
<div class="t" style="left:372.6px;width:42.9px;text-align:center;top:324.90px"><b class="k35">3</b></div>
<div class="t" style="left:839.6px;width:32.4px;text-align:center;top:324.90px"><b class="k36">2</b><b class="k36">2</b></div>
<div class="t" style="left:872.6px;width:32.4px;text-align:center;top:324.90px"><b class="k37">1</b><b class="k37">1</b></div>
<div class="t" style="left:906.1px;top:324.90px"><b class="k3">i</b><b class="k16">n</b><b class="k15">t</b><b class="k11">&#32;</b><b class="k35">3</b><b class="k36">2</b></div>
<div class="a" style="left:2px;top:341px;width:7px;height:7px;border:1px solid #a8a8a8;background:#fff"></div>
<div class="a" style="left:4px;top:344px;width:3px;height:1px;background:#262626"></div>
<div class="a" style="left:5px;top:343px;width:1px;height:3px;background:#262626"></div>
<div class="a" style="left:9px;top:344px;width:5px;height:0;border-top:1px dotted #b0b0b0"></div>
<div class="t" style="left:14.5px;top:339.75px;color:#ec9c2c"><b class="k19">P</b><b class="k20">o</b><b class="k61">w</b><b class="k6">e</b><b class="k2">r</b><b class="k24">L</b><b class="k6">e</b><b class="k30">v</b><b class="k6">e</b><b class="k5">l</b></div>
<div class="t" style="left:125.1px;top:339.75px"><b class="k15">t</b><b class="k1">a</b><b class="k7">s</b><b class="k18">k</b><b class="k7">s</b><b class="k37">1</b><b class="k34">.</b><b class="k21">c</b></div>
<div class="t" style="left:224.1px;top:340.75px"><b class="k57">[</b><b class="k58">-</b><b class="k36">2</b><b class="k37">1</b><b class="k42">4</b><b class="k60">7</b><b class="k42">4</b><b class="k39">8</b><b class="k35">3</b><b class="k49">6</b><b class="k35">3</b><b class="k54">9</b><b class="k11">&#32;</b><b class="k34">.</b><b class="k34">.</b><b class="k11">&#32;</b><b class="k36">2</b><span style="font-size:7.5px;position:relative;top:-3.5px;letter-spacing:-0.2px">31</span><b class="k58">-</b><b class="k37">1</b><b class="k59">]</b></div>
<div class="t" style="left:324.6px;width:47.4px;text-align:center;top:339.75px"><b class="k42">4</b></div>
<div class="t" style="left:372.6px;width:42.9px;text-align:center;top:339.75px"><b class="k35">3</b></div>
<div class="t" style="left:416.7px;top:339.75px"><b class="k7">s</b><b class="k6">e</b><b class="k2">r</b><b class="k30">v</b><b class="k6">e</b><b class="k2">r</b><b class="k37">1</b><b class="k11">&#32;</b><b class="k7">s</b><b class="k6">e</b><b class="k2">r</b><b class="k30">v</b><b class="k6">e</b><b class="k2">r</b><b class="k36">2</b><b class="k11">&#32;</b><b class="k15">t</b><b class="k2">r</b><b class="k6">e</b><b class="k23">g</b><b class="k9">u</b><b class="k5">l</b><b class="k1">a</b><b class="k15">t</b><b class="k6">e</b></div>
<div class="t" style="left:549.1px;top:339.75px"><b class="k7">s</b><b class="k6">e</b><b class="k2">r</b><b class="k30">v</b><b class="k6">e</b><b class="k2">r</b><b class="k37">1</b><b class="k11">&#32;</b><b class="k7">s</b><b class="k6">e</b><b class="k2">r</b><b class="k30">v</b><b class="k6">e</b><b class="k2">r</b><b class="k36">2</b><b class="k11">&#32;</b><b class="k15">t</b><b class="k2">r</b><b class="k6">e</b><b class="k23">g</b><b class="k9">u</b><b class="k5">l</b><b class="k1">a</b><b class="k15">t</b><b class="k6">e</b></div>
<div class="t" style="left:782.1px;top:339.75px"><b class="k7">s</b><b class="k43">h</b><b class="k1">a</b><b class="k2">r</b><b class="k6">e</b><b class="k13">d</b></div>
<div class="t" style="left:839.6px;width:32.4px;text-align:center;top:339.75px"><b class="k36">2</b><b class="k49">6</b></div>
<div class="t" style="left:872.6px;width:32.4px;text-align:center;top:339.75px"><b class="k42">4</b></div>
<div class="t" style="left:906.1px;top:339.75px"><b class="k3">i</b><b class="k16">n</b><b class="k15">t</b><b class="k11">&#32;</b><b class="k35">3</b><b class="k36">2</b></div>
<div class="a" style="left:2px;top:356px;width:7px;height:7px;border:1px solid #a8a8a8;background:#fff"></div>
<div class="a" style="left:4px;top:359px;width:3px;height:1px;background:#262626"></div>
<div class="a" style="left:5px;top:358px;width:1px;height:3px;background:#262626"></div>
<div class="a" style="left:9px;top:359px;width:5px;height:0;border-top:1px dotted #b0b0b0"></div>
<div class="t" style="left:14.5px;top:354.60px;color:#0c0c0c"><b class="k20">o</b><b class="k9">u</b><b class="k15">t</b><b class="k28">p</b><b class="k9">u</b><b class="k15">t</b><b class="k29">_</b><b class="k30">v</b><b class="k60">7</b></div>
<div class="t" style="left:125.1px;top:354.60px"><b class="k7">s</b><b class="k3">i</b><b class="k16">n</b><b class="k23">g</b><b class="k5">l</b><b class="k6">e</b><b class="k29">_</b><b class="k56">f</b><b class="k3">i</b><b class="k5">l</b><b class="k6">e</b><b class="k29">_</b><b class="k1">a</b><b class="k16">n</b><b class="k1">a</b><b class="k5">l</b><b class="k17">y</b><b class="k7">s</b><b class="k3">i</b><b class="k7">s</b><b class="k34">.</b><b class="k21">c</b></div>
<div class="t" style="left:224.1px;top:354.60px"><b class="k57">[</b><b class="k58">-</b><b class="k36">2</b><b class="k38">5</b><b class="k35">3</b><b class="k11">&#32;</b><b class="k34">.</b><b class="k34">.</b><b class="k11">&#32;</b><b class="k38">5</b><b class="k38">5</b><b class="k38">5</b><b class="k59">]</b></div>
<div class="t" style="left:324.6px;width:47.4px;text-align:center;top:354.60px"><b class="k35">3</b></div>
<div class="t" style="left:372.6px;width:42.9px;text-align:center;top:354.60px"><b class="k36">2</b></div>
<div class="t" style="left:839.6px;width:32.4px;text-align:center;top:354.60px"><b class="k36">2</b><b class="k35">3</b></div>
<div class="t" style="left:872.6px;width:32.4px;text-align:center;top:354.60px"><b class="k37">1</b><b class="k37">1</b></div>
<div class="t" style="left:906.1px;top:354.60px"><b class="k3">i</b><b class="k16">n</b><b class="k15">t</b><b class="k11">&#32;</b><b class="k35">3</b><b class="k36">2</b></div>
<div class="a" style="left:2px;top:371px;width:7px;height:7px;border:1px solid #a8a8a8;background:#fff"></div>
<div class="a" style="left:4px;top:374px;width:3px;height:1px;background:#262626"></div>
<div class="a" style="left:5px;top:373px;width:1px;height:3px;background:#262626"></div>
<div class="a" style="left:9px;top:374px;width:5px;height:0;border-top:1px dotted #b0b0b0"></div>
<div class="t" style="left:14.5px;top:369.45px;color:#0c0c0c"><b class="k30">v</b><b class="k36">2</b></div>
<div class="t" style="left:125.1px;top:369.45px"><b class="k7">s</b><b class="k3">i</b><b class="k16">n</b><b class="k23">g</b><b class="k5">l</b><b class="k6">e</b><b class="k29">_</b><b class="k56">f</b><b class="k3">i</b><b class="k5">l</b><b class="k6">e</b><b class="k29">_</b><b class="k1">a</b><b class="k16">n</b><b class="k1">a</b><b class="k5">l</b><b class="k17">y</b><b class="k7">s</b><b class="k3">i</b><b class="k7">s</b><b class="k34">.</b><b class="k21">c</b></div>
<div class="t" style="left:224.1px;top:369.45px"><b class="k57">[</b><b class="k58">-</b><b class="k36">2</b><b class="k38">5</b><b class="k54">9</b><b class="k36">2</b><b class="k50">0</b><b class="k11">&#32;</b><b class="k34">.</b><b class="k34">.</b><b class="k11">&#32;</b><b class="k42">4</b><b class="k39">8</b><b class="k50">0</b><b class="k50">0</b><b class="k59">]</b></div>
<div class="t" style="left:324.6px;width:47.4px;text-align:center;top:369.45px"><b class="k37">1</b></div>
<div class="t" style="left:372.6px;width:42.9px;text-align:center;top:369.45px"><b class="k36">2</b></div>
<div class="t" style="left:839.6px;width:32.4px;text-align:center;top:369.45px"><b class="k37">1</b><b class="k49">6</b></div>
<div class="t" style="left:872.6px;width:32.4px;text-align:center;top:369.45px"><b class="k37">1</b><b class="k37">1</b></div>
<div class="t" style="left:906.1px;top:369.45px"><b class="k3">i</b><b class="k16">n</b><b class="k15">t</b><b class="k11">&#32;</b><b class="k37">1</b><b class="k49">6</b></div>
<div class="a" style="left:2px;top:385px;width:7px;height:7px;border:1px solid #a8a8a8;background:#fff"></div>
<div class="a" style="left:4px;top:388px;width:3px;height:1px;background:#262626"></div>
<div class="a" style="left:5px;top:387px;width:1px;height:3px;background:#262626"></div>
<div class="a" style="left:9px;top:388px;width:5px;height:0;border-top:1px dotted #b0b0b0"></div>
<div class="t" style="left:14.5px;top:384.30px;color:#0c0c0c"><b class="k20">o</b><b class="k9">u</b><b class="k15">t</b><b class="k28">p</b><b class="k9">u</b><b class="k15">t</b><b class="k29">_</b><b class="k30">v</b><b class="k37">1</b></div>
<div class="t" style="left:125.1px;top:384.30px"><b class="k7">s</b><b class="k3">i</b><b class="k16">n</b><b class="k23">g</b><b class="k5">l</b><b class="k6">e</b><b class="k29">_</b><b class="k56">f</b><b class="k3">i</b><b class="k5">l</b><b class="k6">e</b><b class="k29">_</b><b class="k1">a</b><b class="k16">n</b><b class="k1">a</b><b class="k5">l</b><b class="k17">y</b><b class="k7">s</b><b class="k3">i</b><b class="k7">s</b><b class="k34">.</b><b class="k21">c</b></div>
<div class="t" style="left:224.1px;top:384.30px"><b class="k57">[</b><b class="k58">-</b><b class="k35">3</b><b class="k37">1</b><b class="k11">&#32;</b><b class="k34">.</b><b class="k34">.</b><b class="k11">&#32;</b><b class="k37">1</b><b class="k36">2</b><b class="k60">7</b><b class="k59">]</b></div>
<div class="t" style="left:324.6px;width:47.4px;text-align:center;top:384.30px"><b class="k50">0</b></div>
<div class="t" style="left:372.6px;width:42.9px;text-align:center;top:384.30px"><b class="k36">2</b></div>
<div class="t" style="left:839.6px;width:32.4px;text-align:center;top:384.30px"><b class="k36">2</b><b class="k42">4</b></div>
<div class="t" style="left:872.6px;width:32.4px;text-align:center;top:384.30px"><b class="k37">1</b><b class="k50">0</b></div>
<div class="t" style="left:906.1px;top:384.30px"><b class="k3">i</b><b class="k16">n</b><b class="k15">t</b><b class="k11">&#32;</b><b class="k39">8</b></div>
<div class="a" style="left:2px;top:400px;width:7px;height:7px;border:1px solid #a8a8a8;background:#fff"></div>
<div class="a" style="left:4px;top:403px;width:3px;height:1px;background:#262626"></div>
<div class="a" style="left:5px;top:402px;width:1px;height:3px;background:#262626"></div>
<div class="a" style="left:9px;top:403px;width:5px;height:0;border-top:1px dotted #b0b0b0"></div>
<div class="t" style="left:14.5px;top:399.15px;color:#0c0c0c"><b class="k7">s</b><b class="k1">a</b><b class="k30">v</b><b class="k6">e</b><b class="k13">d</b><b class="k29">_</b><b class="k30">v</b><b class="k1">a</b><b class="k5">l</b><b class="k9">u</b><b class="k6">e</b><b class="k7">s</b></div>
<div class="t" style="left:125.1px;top:399.15px"><b class="k7">s</b><b class="k3">i</b><b class="k16">n</b><b class="k23">g</b><b class="k5">l</b><b class="k6">e</b><b class="k29">_</b><b class="k56">f</b><b class="k3">i</b><b class="k5">l</b><b class="k6">e</b><b class="k29">_</b><b class="k1">a</b><b class="k16">n</b><b class="k1">a</b><b class="k5">l</b><b class="k17">y</b><b class="k7">s</b><b class="k3">i</b><b class="k7">s</b><b class="k34">.</b><b class="k21">c</b></div>
<div class="t" style="left:224.1px;top:399.15px"><b class="k57">[</b><b class="k58">-</b><b class="k35">3</b><b class="k36">2</b><b class="k11">&#32;</b><b class="k34">.</b><b class="k34">.</b><b class="k11">&#32;</b><b class="k37">1</b><b class="k37">1</b><b class="k36">2</b><b class="k59">]</b></div>
<div class="t" style="left:324.6px;width:47.4px;text-align:center;top:399.15px"><b class="k50">0</b></div>
<div class="t" style="left:372.6px;width:42.9px;text-align:center;top:399.15px"><b class="k36">2</b></div>
<div class="t" style="left:839.6px;width:32.4px;text-align:center;top:399.15px"><b class="k36">2</b><b class="k49">6</b></div>
<div class="t" style="left:872.6px;width:32.4px;text-align:center;top:399.15px"><b class="k37">1</b><b class="k37">1</b></div>
<div class="t" style="left:906.1px;top:399.15px"><b class="k1">a</b><b class="k2">r</b><b class="k2">r</b><b class="k1">a</b><b class="k17">y</b><b class="k53">(</b><b class="k50">0</b><b class="k34">.</b><b class="k34">.</b><b class="k37">1</b><b class="k36">2</b><b class="k49">6</b><b class="k55">)</b><b class="k11">&#32;</b><b class="k20">o</b><b class="k56">f</b><b class="k11">&#32;</b><b class="k3">i</b><b class="k16">n</b><b class="k15">t</b><b class="k11">&#32;</b><b class="k37">1</b><b class="k49">6</b></div>
<div class="a" style="left:2px;top:415px;width:7px;height:7px;border:1px solid #a8a8a8;background:#fff"></div>
<div class="a" style="left:4px;top:418px;width:3px;height:1px;background:#262626"></div>
<div class="a" style="left:5px;top:417px;width:1px;height:3px;background:#262626"></div>
<div class="a" style="left:9px;top:418px;width:5px;height:0;border-top:1px dotted #b0b0b0"></div>
<div class="t" style="left:14.5px;top:414.00px;color:#0c0c0c"><b class="k30">v</b><b class="k42">4</b></div>
<div class="t" style="left:125.1px;top:414.00px"><b class="k7">s</b><b class="k3">i</b><b class="k16">n</b><b class="k23">g</b><b class="k5">l</b><b class="k6">e</b><b class="k29">_</b><b class="k56">f</b><b class="k3">i</b><b class="k5">l</b><b class="k6">e</b><b class="k29">_</b><b class="k1">a</b><b class="k16">n</b><b class="k1">a</b><b class="k5">l</b><b class="k17">y</b><b class="k7">s</b><b class="k3">i</b><b class="k7">s</b><b class="k34">.</b><b class="k21">c</b></div>
<div class="t" style="left:224.1px;top:414.00px"><b class="k57">[</b><b class="k58">-</b><b class="k35">3</b><b class="k49">6</b><b class="k50">0</b><b class="k11">&#32;</b><b class="k34">.</b><b class="k34">.</b><b class="k11">&#32;</b><b class="k37">1</b><b class="k50">0</b><b class="k50">0</b><b class="k39">8</b><b class="k59">]</b></div>
<div class="t" style="left:324.6px;width:47.4px;text-align:center;top:414.00px"><b class="k37">1</b></div>
<div class="t" style="left:372.6px;width:42.9px;text-align:center;top:414.00px"><b class="k36">2</b></div>
<div class="t" style="left:839.6px;width:32.4px;text-align:center;top:414.00px"><b class="k37">1</b><b class="k39">8</b></div>
<div class="t" style="left:872.6px;width:32.4px;text-align:center;top:414.00px"><b class="k37">1</b><b class="k37">1</b></div>
<div class="t" style="left:906.1px;top:414.00px"><b class="k3">i</b><b class="k16">n</b><b class="k15">t</b><b class="k11">&#32;</b><b class="k37">1</b><b class="k49">6</b></div>
<div class="a" style="left:2px;top:430px;width:7px;height:7px;border:1px solid #a8a8a8;background:#fff"></div>
<div class="a" style="left:4px;top:433px;width:3px;height:1px;background:#262626"></div>
<div class="a" style="left:5px;top:432px;width:1px;height:3px;background:#262626"></div>
<div class="a" style="left:9px;top:433px;width:5px;height:0;border-top:1px dotted #b0b0b0"></div>
<div class="t" style="left:14.5px;top:428.85px;color:#0c0c0c"><b class="k30">v</b><b class="k35">3</b></div>
<div class="t" style="left:125.1px;top:428.85px"><b class="k7">s</b><b class="k3">i</b><b class="k16">n</b><b class="k23">g</b><b class="k5">l</b><b class="k6">e</b><b class="k29">_</b><b class="k56">f</b><b class="k3">i</b><b class="k5">l</b><b class="k6">e</b><b class="k29">_</b><b class="k1">a</b><b class="k16">n</b><b class="k1">a</b><b class="k5">l</b><b class="k17">y</b><b class="k7">s</b><b class="k3">i</b><b class="k7">s</b><b class="k34">.</b><b class="k21">c</b></div>
<div class="t" style="left:224.1px;top:428.85px"><b class="k57">[</b><b class="k50">0</b><b class="k11">&#32;</b><b class="k34">.</b><b class="k34">.</b><b class="k11">&#32;</b><b class="k36">2</b><b class="k37">1</b><b class="k49">6</b><b class="k59">]</b></div>
<div class="t" style="left:324.6px;width:47.4px;text-align:center;top:428.85px"><b class="k36">2</b></div>
<div class="t" style="left:372.6px;width:42.9px;text-align:center;top:428.85px"><b class="k36">2</b></div>
<div class="t" style="left:839.6px;width:32.4px;text-align:center;top:428.85px"><b class="k37">1</b><b class="k60">7</b></div>
<div class="t" style="left:872.6px;width:32.4px;text-align:center;top:428.85px"><b class="k37">1</b><b class="k50">0</b></div>
<div class="t" style="left:906.1px;top:428.85px"><b class="k9">u</b><b class="k16">n</b><b class="k7">s</b><b class="k3">i</b><b class="k23">g</b><b class="k16">n</b><b class="k6">e</b><b class="k13">d</b><b class="k11">&#32;</b><b class="k3">i</b><b class="k16">n</b><b class="k15">t</b><b class="k11">&#32;</b><b class="k39">8</b></div>
<div class="a" style="left:2px;top:445px;width:7px;height:7px;border:1px solid #a8a8a8;background:#fff"></div>
<div class="a" style="left:4px;top:448px;width:3px;height:1px;background:#262626"></div>
<div class="a" style="left:5px;top:447px;width:1px;height:3px;background:#262626"></div>
<div class="a" style="left:9px;top:448px;width:5px;height:0;border-top:1px dotted #b0b0b0"></div>
<div class="t" style="left:14.5px;top:443.70px;color:#0c0c0c"><b class="k30">v</b><b class="k37">1</b></div>
<div class="t" style="left:125.1px;top:443.70px"><b class="k7">s</b><b class="k3">i</b><b class="k16">n</b><b class="k23">g</b><b class="k5">l</b><b class="k6">e</b><b class="k29">_</b><b class="k56">f</b><b class="k3">i</b><b class="k5">l</b><b class="k6">e</b><b class="k29">_</b><b class="k1">a</b><b class="k16">n</b><b class="k1">a</b><b class="k5">l</b><b class="k17">y</b><b class="k7">s</b><b class="k3">i</b><b class="k7">s</b><b class="k34">.</b><b class="k21">c</b></div>
<div class="t" style="left:224.1px;top:443.70px"><b class="k57">[</b><b class="k50">0</b><b class="k11">&#32;</b><b class="k34">.</b><b class="k34">.</b><b class="k11">&#32;</b><b class="k36">2</b><b class="k35">3</b><b class="k50">0</b><b class="k42">4</b><b class="k50">0</b><b class="k59">]</b></div>
<div class="t" style="left:324.6px;width:47.4px;text-align:center;top:443.70px"><b class="k35">3</b></div>
<div class="t" style="left:372.6px;width:42.9px;text-align:center;top:443.70px"><b class="k36">2</b></div>
<div class="t" style="left:839.6px;width:32.4px;text-align:center;top:443.70px"><b class="k37">1</b><b class="k38">5</b></div>
<div class="t" style="left:872.6px;width:32.4px;text-align:center;top:443.70px"><b class="k37">1</b><b class="k37">1</b></div>
<div class="t" style="left:906.1px;top:443.70px"><b class="k3">i</b><b class="k16">n</b><b class="k15">t</b><b class="k11">&#32;</b><b class="k37">1</b><b class="k49">6</b></div>
<div class="a" style="left:2px;top:460px;width:7px;height:7px;border:1px solid #a8a8a8;background:#fff"></div>
<div class="a" style="left:4px;top:463px;width:3px;height:1px;background:#262626"></div>
<div class="a" style="left:5px;top:462px;width:1px;height:3px;background:#262626"></div>
<div class="a" style="left:9px;top:463px;width:5px;height:0;border-top:1px dotted #b0b0b0"></div>
<div class="t" style="left:14.5px;top:458.55px;color:#0c0c0c"><b class="k30">v</b><b class="k50">0</b></div>
<div class="t" style="left:125.1px;top:458.55px"><b class="k7">s</b><b class="k3">i</b><b class="k16">n</b><b class="k23">g</b><b class="k5">l</b><b class="k6">e</b><b class="k29">_</b><b class="k56">f</b><b class="k3">i</b><b class="k5">l</b><b class="k6">e</b><b class="k29">_</b><b class="k1">a</b><b class="k16">n</b><b class="k1">a</b><b class="k5">l</b><b class="k17">y</b><b class="k7">s</b><b class="k3">i</b><b class="k7">s</b><b class="k34">.</b><b class="k21">c</b></div>
<div class="t" style="left:224.1px;top:458.55px"><b class="k57">[</b><b class="k50">0</b><b class="k11">&#32;</b><b class="k34">.</b><b class="k34">.</b><b class="k11">&#32;</b><b class="k36">2</b><b class="k49">6</b><b class="k49">6</b><b class="k36">2</b><b class="k42">4</b><b class="k59">]</b></div>
<div class="t" style="left:324.6px;width:47.4px;text-align:center;top:458.55px"><b class="k37">1</b></div>
<div class="t" style="left:372.6px;width:42.9px;text-align:center;top:458.55px"><b class="k36">2</b></div>
<div class="t" style="left:839.6px;width:32.4px;text-align:center;top:458.55px"><b class="k37">1</b><b class="k42">4</b></div>
<div class="t" style="left:872.6px;width:32.4px;text-align:center;top:458.55px"><b class="k37">1</b><b class="k37">1</b></div>
<div class="t" style="left:906.1px;top:458.55px"><b class="k9">u</b><b class="k16">n</b><b class="k7">s</b><b class="k3">i</b><b class="k23">g</b><b class="k16">n</b><b class="k6">e</b><b class="k13">d</b><b class="k11">&#32;</b><b class="k3">i</b><b class="k16">n</b><b class="k15">t</b><b class="k11">&#32;</b><b class="k37">1</b><b class="k49">6</b></div>
<div class="a" style="left:0;top:485px;width:1000px;height:14px;background:#ebebeb"></div>
<div class="a" style="left:13.3px;top:486px;width:966.5px;height:12.5px;border:1px solid #a0a0a0;border-bottom-color:#b8b8b8;border-radius:2px;background:linear-gradient(#f2f2f2,#e9e9e9 35%,#dadada 60%,#cbcbcb)"></div>
<svg class="a" style="left:2px;top:488px" width="6" height="8"><path d="M4.8 0.8 L1.8 3.9 L4.8 7 Z" fill="#2a2a2a"/></svg>
<svg class="a" style="left:991px;top:488px" width="6" height="8"><path d="M1.3 0.8 L4.3 3.9 L1.3 7 Z" fill="#2a2a2a"/></svg>
<svg class="a" style="left:492px;top:489px" width="9" height="7"><path d="M1.6 0.5 V6 M4.3 0.5 V6 M7 0.5 V6" stroke="#555" stroke-width="1"/></svg>
<div class="a" style="left:0;top:499px;width:1000px;height:64px;background:#f3f3f3"></div>
<svg class="a" style="left:0;top:57px" width="14" height="14"><rect x="1.4" y="1.6" width="10.4" height="9.8" rx="1" fill="#86a8d4" stroke="#a6c0e2" stroke-width="0.9"/><path d="M4.2 4.4 L9 8.8 M9.8 3.8 L3.4 9.8" stroke="#235a9c" stroke-width="1.15" stroke-linecap="round"/><circle cx="4.2" cy="4.3" r="1.15" fill="#235a9c"/><circle cx="9.8" cy="3.8" r="0.8" fill="#235a9c"/><circle cx="3.4" cy="9.8" r="0.8" fill="#235a9c"/><circle cx="9" cy="9" r="0.8" fill="#235a9c"/></svg>
<div class="t" style="left:16px;top:60.07px;color:#fff;font-size:9.6px"><b class="k62">V</b><b class="k63">a</b><b class="k64">r</b><b class="k65">i</b><b class="k63">a</b><b class="k66">b</b><b class="k67">l</b><b class="k68">e</b><b class="k69">&#32;</b><b class="k70">A</b><b class="k71">c</b><b class="k71">c</b><b class="k68">e</b><b class="k72">s</b><b class="k72">s</b></div>
<svg class="a" style="left:979px;top:58px" width="20" height="10"><rect x="2.4" y="2.6" width="5" height="5" fill="none" stroke="#fff" stroke-width="1.2"/><path d="M3 3.2 L5.6 5.8" stroke="#fff" stroke-width="0.9"/><path d="M11.8 2.2 L17.4 7.8 M17.4 2.2 L11.8 7.8" stroke="#f4f7fb" stroke-width="1.1"/></svg>
<svg class="a" style="left:0;top:73px" width="18" height="18"><path d="M3.6 7.5 L12 4.2 M3.6 7.5 L12 12.1" stroke="#8c8c8c" stroke-width="1.1"/><circle cx="3.6" cy="7.5" r="2.5" fill="#8e8e8e"/><circle cx="12" cy="4.2" r="2.4" fill="#8e8e8e"/><circle cx="12" cy="12.1" r="2.4" fill="#8e8e8e"/></svg>
<svg class="a" style="left:22px;top:75px" width="15" height="14"><rect x="1.7" y="1.4" width="11" height="11" rx="1" fill="#f9fbfe" stroke="#a8c9e7" stroke-width="1"/><path d="M5.6 5 L9.6 8.4 M10.8 4.4 L4.6 9" stroke="#2e6fb5" stroke-width="1.05" stroke-linecap="round"/><circle cx="5.6" cy="4.9" r="1.15" fill="#2e6fb5"/><circle cx="10.8" cy="4.4" r="0.75" fill="#2e6fb5"/><circle cx="4.5" cy="9.1" r="0.75" fill="#2e6fb5"/><circle cx="9.6" cy="8.8" r="0.75" fill="#2e6fb5"/></svg>
<svg class="a" style="left:42px;top:76px" width="11" height="11"><path d="M1.3 1.7 L9.4 9.9 M9.4 1.7 L1.3 9.9" stroke="#666" stroke-width="1.5"/></svg>
<svg class="a" style="left:53px;top:78px" width="11" height="11"><rect x="1.5" y="1.4" width="8" height="8" rx="1" fill="#f9fbfe" stroke="#a8cbe8" stroke-width="1"/><path d="M4 3.8 L7 7 M7.4 3.4 L3.4 7.6" stroke="#2e6fb5" stroke-width="1" stroke-linecap="round"/><circle cx="4.1" cy="3.9" r="0.8" fill="#2e6fb5"/></svg>
</body></html>
